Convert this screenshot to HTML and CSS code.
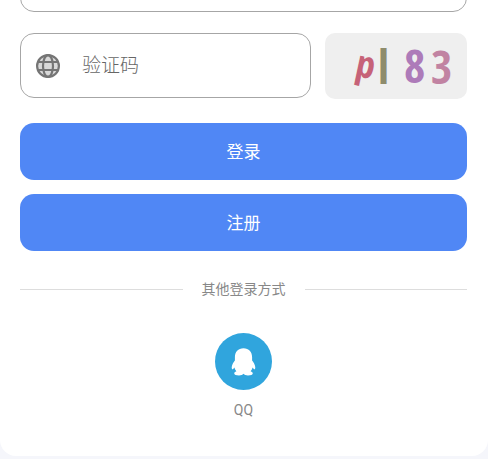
FILE: index.html
```html
<!DOCTYPE html>
<html lang="zh-CN">
<head>
<meta charset="utf-8">
<meta name="viewport" content="width=device-width, initial-scale=1">
<title>登录</title>
<link rel="stylesheet" href="styles.css">
</head>
<body>
<main class="card">
  <form class="form">
    <div class="field field-previous"><input class="field-input" type="password" aria-label="密码"></div>
    <div class="captcha-row">
      <label class="field">
        <svg class="field-icon" viewBox="0 0 24 24" aria-hidden="true">
          <circle cx="12" cy="12" r="11" fill="#d9d9d9"/>
          <g fill="none" stroke="#757575" stroke-width="2.200">
            <circle cx="12" cy="12" r="10.900"/>
            <ellipse cx="12" cy="12" rx="5" ry="10.900"/>
            <path d="M2 8h20M2 16h20"/>
          </g>
        </svg>
        <input class="field-input" type="text" placeholder="验证码" aria-label="验证码">
      </label>
      <button class="captcha" type="button" aria-label="刷新验证码">
        <svg class="captcha-image" viewBox="0 0 142 66">
          <text class="code code-p" x="30" y="44" transform="rotate(12 37 38)" fill="#c66278">p</text>
          <text class="code" x="53" y="51" fill="#8e8c6c">l</text>
          <text class="code" x="79" y="50" fill="#ad7bb9">8</text>
          <text class="code" x="106" y="51" fill="#c183a2">3</text>
        </svg>
      </button>
    </div>
    <div class="actions">
      <button class="button" type="submit">登录</button>
      <button class="button" type="button">注册</button>
    </div>
  </form>
  <div class="divider">其他登录方式</div>
  <a class="provider" href="#qq">
    <svg class="provider-icon" viewBox="0 0 57 57" aria-hidden="true">
      <circle cx="28.5" cy="28.5" r="28.5" fill="#30a5dd"/>
      <path fill="#fff" d="M28.500 15.200c-5.400 0-8.600 3.600-8.600 8.800v3.500c-1.500 2-3.200 4.500-3.200 7 0 2 1 2.100 1.700 1.200l1-1.200c.3 1.500 1 2.700 2 3.700-1.400.5-2.200 1.200-2.200 2 0 1.500 2 2.200 4.800 2.200 2 0 3.600-.6 4.500-1.600.9 1 2.500 1.600 4.500 1.600 2.800 0 4.800-.7 4.800-2.200 0-.8-.8-1.500-2.200-2 1-1 1.700-2.200 2-3.700l1 1.200c.7.900 1.700.8 1.700-1.200 0-2.500-1.700-5-3.200-7v-3.500c0-5.200-3.200-8.800-8.600-8.800z"/>
    </svg>
    <span>QQ</span>
  </a>
</main>
</body>
</html>
```
FILE: styles.css
```css
* { box-sizing: border-box; }
body {
  margin: 0;
  background: #f5f6fb;
  font-family: Roboto, "Noto Sans CJK SC", sans-serif;
  overflow: hidden;
}
.card {
  background: #fff;
  border-radius: 0 0 16px 16px;
  padding: 0 21px 36px 20px;
  overflow: hidden;
}
.field {
  display: flex;
  flex: 1;
  align-items: center;
  gap: 22px;
  min-width: 0;
  height: 65px;
  padding: 0 15px;
  border: 1px solid #a6a6a6;
  border-radius: 14px;
}
/* The field above is scrolled mostly out of view. */
.field-previous { margin-top: -53px; }
.field-icon { flex: none; width: 24px; height: 24px; }
.field-input {
  flex: 1;
  min-width: 0;
  padding: 0;
  border: 0;
  outline: 0;
  background: transparent;
  color: #333;
  font: 300 19px/28px Roboto, "Noto Sans CJK SC", sans-serif;
}
.field-input::placeholder { color: #666; opacity: 1; }
.captcha-row { display: flex; gap: 14px; margin-top: 21px; }
.captcha {
  flex: none;
  padding: 0;
  border: 0;
  border-radius: 10px;
  background: #efefef;
}
.captcha-image { display: block; width: 142px; height: 66px; }
.code { font: bold 46px "Open Sans Condensed", "Roboto Condensed", Roboto, sans-serif; }
.code-p { font-size: 38px; }
.actions { display: grid; gap: 14px; margin-top: 24px; }
.button {
  height: 57px;
  padding: 0;
  border: 0;
  border-radius: 14px;
  background: #5087f5;
  color: #fff;
  font: 17px/24px Roboto, "Noto Sans CJK SC", sans-serif;
}
.divider {
  display: flex;
  align-items: center;
  gap: 19px;
  margin-top: 28px;
  color: #888;
  font-size: 14px;
  line-height: 20px;
}
.divider::before, .divider::after {
  content: "";
  flex: 1;
  height: 1px;
  background: #ddd;
}
.provider {
  display: grid;
  justify-items: center;
  gap: 10px;
  width: fit-content;
  margin: 34px auto 0;
  color: #888;
  font-size: 14px;
  line-height: 20px;
  text-decoration: none;
}
.provider-icon { width: 57px; height: 57px; }
```
